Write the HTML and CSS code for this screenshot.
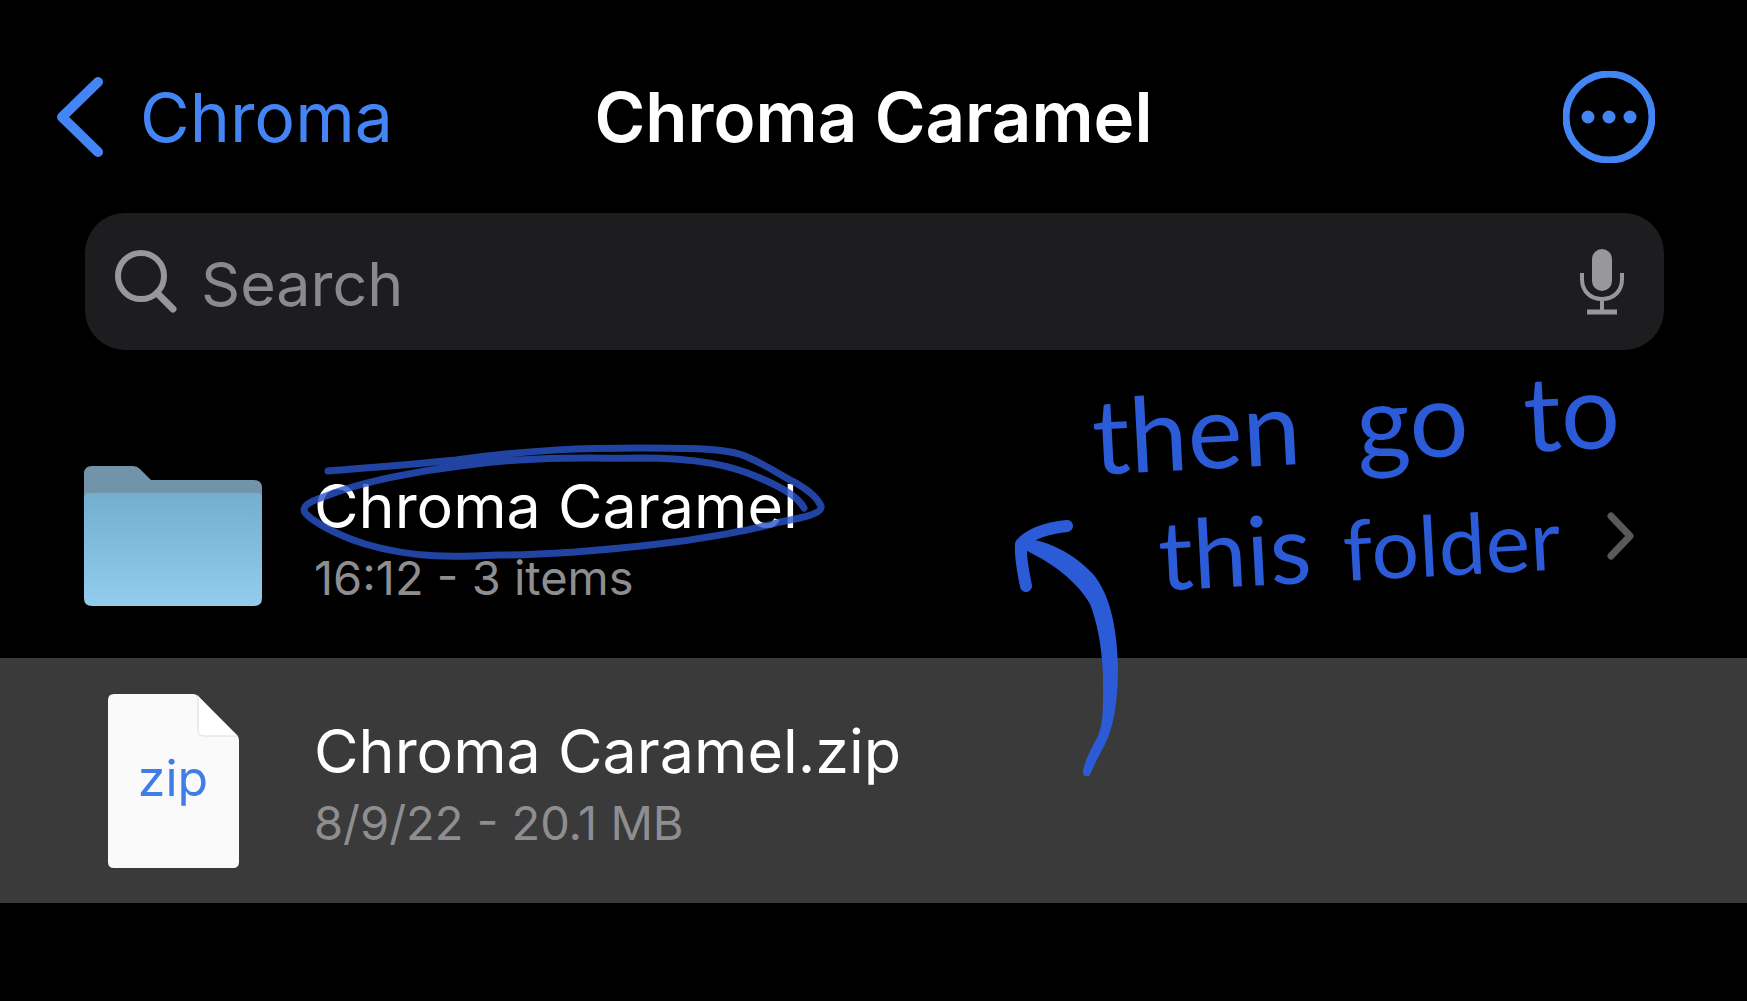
FILE: index.html
```html
<!DOCTYPE html>
<html lang="en">
<head>
    <meta charset="UTF-8">
    <meta name="viewport" content="width=device-width, initial-scale=1.0">
    <title>Chroma Caramel</title>
    <link rel="stylesheet" href="styles.css">
</head>
<body>
    <!-- Navigation bar -->
    <header class="nav-bar">
        <a href="#" class="back-link">
            <svg class="back-icon" viewBox="0 0 48 80" aria-hidden="true">
                <path d="M42 5 L6 40 L42 75" />
            </svg>
            Chroma
        </a>
        <h1>Chroma Caramel</h1>
        <button type="button" class="more-btn" aria-label="More">
            <svg viewBox="0 0 92 92" aria-hidden="true">
                <circle class="ring" cx="46" cy="46" r="43" />
                <circle cx="25" cy="46" r="6.5" />
                <circle cx="46" cy="46" r="6.5" />
                <circle cx="67" cy="46" r="6.5" />
            </svg>
        </button>
    </header>

    <!-- Search -->
    <form class="search-box" role="search">
        <svg class="search-icon" viewBox="0 0 62 64" aria-hidden="true">
            <circle cx="26" cy="26" r="23" />
            <path d="M42 43 L58 59" />
        </svg>
        <input type="search" placeholder="Search" aria-label="Search">
        <button type="button" class="mic-btn" aria-label="Dictate">
            <svg viewBox="0 0 44 68" aria-hidden="true">
                <rect x="12" y="1" width="20" height="42" rx="10" />
                <path d="M2 25 V31 C2 43 10 51 22 51 C34 51 42 43 42 31 V25 M22 51 V63" />
                <path class="base" d="M7 64 H37" />
            </svg>
        </button>
    </form>

    <!-- File list -->
    <main>
        <ul class="file-list">
            <li>
                <a href="#" class="file-row">
                    <span class="thumb">
                        <svg class="folder-icon" viewBox="0 0 178 140" aria-hidden="true">
                            <defs>
                                <linearGradient id="folder-front" x1="0" y1="0" x2="0" y2="1">
                                    <stop offset="0" stop-color="#74aecd" />
                                    <stop offset="1" stop-color="#93cdee" />
                                </linearGradient>
                            </defs>
                            <path fill="#7194ab" d="M8 0 H49 Q53 0 56 3 L67 14 H170 Q178 14 178 22 V60 H0 V8 Q0 0 8 0 Z" />
                            <path fill="url(#folder-front)" d="M0 32 Q0 27 5 27 H173 Q178 27 178 32 V132 Q178 140 170 140 H8 Q0 140 0 132 Z" />
                        </svg>
                    </span>
                    <span class="info">
                        <span class="name">Chroma Caramel
                            <svg class="circled" viewBox="0 0 536 128" aria-hidden="true">
                                <path d="M32 33 C70 30 110 27 160 22 C240 11 290 10 344 10 C390 10 430 10 449 18 C475 29 485 38 500 45 C514 53 522 61 525 68 C527 76 505 80 484 84 C460 91 410 101 354 107 C290 114 235 117 204 117 C160 119 120 121 69 106 C40 97 18 84 10 76 C4 69 12 64 30 58 C65 44 120 33 164 28 C240 17 300 21 344 20 C400 20 435 27 464 40 C490 51 503 60 508 70" />
                            </svg>
                        </span>
                        <span class="details">16:12 - 3 items</span>
                    </span>
                    <svg class="open-icon" viewBox="0 0 28 48" aria-hidden="true">
                        <path d="M4 4 L23 24 L4 44" />
                    </svg>
                </a>
            </li>
            <li>
                <a href="#" class="file-row selected">
                    <span class="thumb">
                        <span class="zip-icon">
                            <svg viewBox="0 0 131 174" aria-hidden="true">
                                <path fill="#fafafa" d="M6 0 H85 Q88 0 90 2 L129 41 Q131 43 131 46 V168 Q131 174 125 174 H6 Q0 174 0 168 V6 Q0 0 6 0 Z" />
                                <path fill="#fff" stroke="#dcdcdc" d="M90 2 V36 Q90 42 96 42 H129" />
                            </svg>
                            <span class="ext">zip</span>
                        </span>
                    </span>
                    <span class="info">
                        <span class="name">Chroma Caramel.zip</span>
                        <span class="details">8/9/22 - 20.1 MB</span>
                    </span>
                </a>
            </li>
        </ul>

        <!-- Pen note over the list -->
        <div class="note">
            <p class="first"><span>then</span> <span>go</span> <span>to</span></p>
            <p class="second"><span>this</span> <span class="small">folder</span></p>
        </div>
        <svg class="arrow" viewBox="0 0 110 260" aria-hidden="true">
            <path class="head" d="M54 10 C34 12 17 18 8 28 C7 42 10 55 13 70" />
            <path class="shaft" d="M8 22 C35 24 60 37 80 58 C97 78 104 112 105 150 C105 192 99 218 88 236 C82 246 80 254 76 260 Q69 262 70 254 C73 243 78 232 84 222 C91 208 90 190 90 160 C89 130 84 106 77 88 C64 65 38 46 10 33 Z" />
        </svg>
    </main>
</body>
</html>
```
FILE: styles.css
```css
/* General Styles */
* {
    box-sizing: border-box;
}

body {
    font-family: Inter, "Liberation Sans", sans-serif;
    background: #000;
    color: #fff;
    margin: 0;
}

a {
    color: inherit;
    text-decoration: none;
}

button {
    background: none;
    border: none;
    padding: 0;
    cursor: pointer;
}

svg {
    display: block;
    fill: none;
    stroke-linecap: round;
    stroke-linejoin: round;
}

/* Navigation bar */
.nav-bar {
    display: grid;
    grid-template-columns: 1fr auto 1fr;
    align-items: center;
    padding: 69px 56px 48px;
}

.back-link {
    display: flex;
    align-items: center;
    gap: 36px;
    color: #4485f5;
    font-size: 68px;
    line-height: 96px;
}

.back-icon {
    width: 48px;
    stroke: #4485f5;
    stroke-width: 10;
}

h1 {
    margin: 0;
    font-size: 69px;
    font-weight: 600;
    line-height: 96px;
}

.more-btn {
    justify-self: end;
    width: 92px;
    margin-right: 36px;
}

.more-btn svg {
    fill: #4485f5;
}

.more-btn .ring {
    fill: none;
    stroke: #4485f5;
    stroke-width: 7;
}

/* Search */
.search-box {
    display: flex;
    align-items: center;
    gap: 24px;
    height: 137px;
    margin: 0 83px 0 85px;
    padding: 0 40px 0 30px;
    background: #1d1d1f;
    border-radius: 40px;
}

.search-icon {
    width: 62px;
    stroke: #98989b;
    stroke-width: 6;
}

.search-icon path {
    stroke-width: 7;
}

.search-box input {
    flex: 1;
    min-width: 0;
    padding: 4px 0 0;
    background: none;
    border: none;
    outline: none;
    color: #fff;
    font-family: inherit;
    font-size: 61px;
}

.search-box input::placeholder {
    color: #8a8a8d;
    opacity: 1;
}

.mic-btn {
    width: 44px;
}

.mic-btn svg {
    stroke: #98989b;
    stroke-width: 4;
    stroke-linecap: butt;
}

.mic-btn rect {
    fill: #98989b;
    stroke: none;
}

.mic-btn .base {
    stroke-width: 5;
}

/* File list */
main {
    position: relative;
    padding-top: 63px;
}

.file-list {
    list-style: none;
    margin: 0;
    padding: 0;
}

.file-row {
    display: flex;
    align-items: center;
    height: 245px;
    padding: 0 112px 0 84px;
}

.file-row.selected {
    background: #3a3a3b;
}

.thumb {
    display: flex;
    justify-content: center;
    width: 178px;
    margin-right: 52px;
}

.folder-icon {
    width: 178px;
}

.zip-icon {
    display: grid;
    place-items: center;
    width: 131px;
}

.zip-icon svg,
.zip-icon .ext {
    grid-area: 1 / 1;
}

.ext {
    z-index: 1;
    padding-bottom: 6px;
    color: #3f7ee8;
    font-size: 50px;
}

.info {
    display: flex;
    flex: 1;
    flex-direction: column;
    align-items: flex-start;
    padding-top: 8px;
}

.name {
    position: relative;
    font-size: 61px;
    line-height: 76px;
}

.details {
    color: #8e8e90;
    font-size: 47px;
    line-height: 68px;
}

.open-icon {
    width: 28px;
    stroke: #59595b;
    stroke-width: 7;
}

/* Pen marks */
.circled {
    position: absolute;
    top: -30px;
    left: -18px;
    width: 536px;
    stroke: #2a55cc;
    stroke-width: 7;
    opacity: 0.8;
}

.note {
    position: absolute;
    top: 10px;
    right: 124px;
    width: 528px;
    color: #2b5bd7;
    font-family: Lato, sans-serif;
    font-size: 96px;
    line-height: 122px;
    transform: rotate(-3deg);
    pointer-events: none;
}

.note p {
    display: flex;
    align-items: baseline;
    margin: 0;
}

.note .first {
    justify-content: space-between;
    font-size: 104px;
}

.note .second {
    gap: 32px;
    padding-left: 60px;
}

.note .small {
    font-size: 84px;
}

.arrow {
    position: absolute;
    top: 166px;
    right: 624px;
    width: 110px;
    pointer-events: none;
}

.arrow .head {
    stroke: #2b5bd7;
    stroke-width: 12;
}

.arrow .shaft {
    fill: #2b5bd7;
}
```
